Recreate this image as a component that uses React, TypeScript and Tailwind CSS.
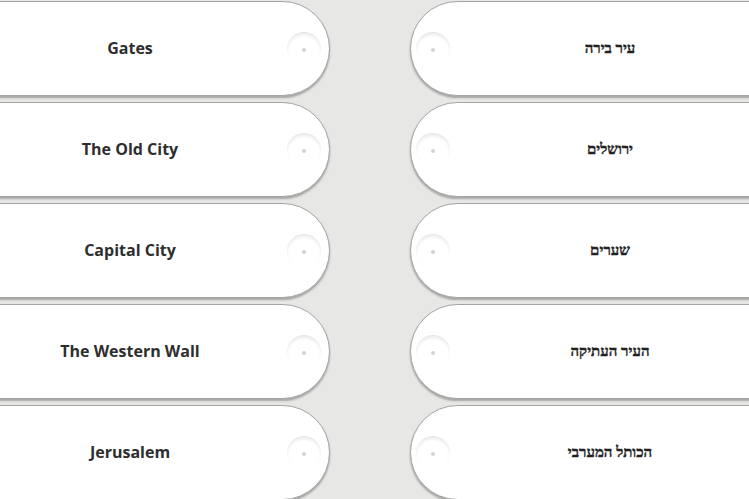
const rows = [
  { en: "Gates", he: "עיר בירה" },
  { en: "The Old City", he: "ירושלים" },
  { en: "Capital City", he: "שערים" },
  { en: "The Western Wall", he: "העיר העתיקה" },
  { en: "Jerusalem", he: "הכותל המערבי" },
];

// faint knob on the rounded end of each card
const Knob = () => (
  <div className="w-[34px] h-[34px] rounded-full flex items-center justify-center shadow-[inset_0_2px_3px_rgba(0,0,0,0.08)] border-t border-[#e6e6e6]">
    <div className="w-[4px] h-[4px] rounded-full bg-[#d3d3d3]" />
  </div>
);

export default function App() {
  return (
    <div className="w-[749px] h-[499px] overflow-hidden bg-[#e7e7e5] pt-[1px]">
      {rows.map((r) => (
        <div key={r.en} className="flex gap-[80px] mb-[6px]">
          <div className="ml-[-70px] w-[400px] h-[95px] shrink-0 bg-white border border-[#a3a3a3] rounded-r-[48px] shadow-[0_2px_2px_rgba(0,0,0,0.28)] flex items-center relative">
            <div className="flex-1 text-center text-[16px] font-bold text-[#2e2e2e] font-['Open_Sans','Noto_Sans',sans-serif] pb-[1px]">
              {r.en}
            </div>
            <div className="absolute right-[8px] top-[30px]">
              <Knob />
            </div>
          </div>
          <div className="w-[400px] h-[95px] shrink-0 bg-white border border-[#a3a3a3] rounded-l-[48px] shadow-[0_2px_2px_rgba(0,0,0,0.28)] flex items-center relative">
            <div
              dir="rtl"
              className="flex-1 text-center text-[15px] font-bold text-[#222] font-['Liberation_Serif','DejaVu_Serif',serif] [-webkit-text-stroke:0.4px_#222]"
            >
              {r.he}
            </div>
            <div className="absolute left-[5px] top-[30px]">
              <Knob />
            </div>
          </div>
        </div>
      ))}
    </div>
  );
}
